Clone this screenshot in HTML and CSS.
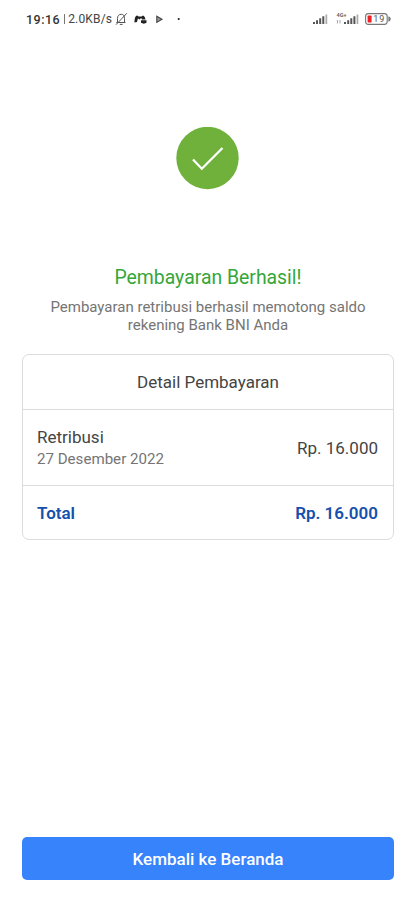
FILE: index.html
```html
<!DOCTYPE html>
<html lang="id">
<head>
<meta charset="utf-8">
<meta name="viewport" content="width=device-width, initial-scale=1">
<title>Pembayaran Berhasil</title>
<link rel="stylesheet" href="styles.css">
</head>
<body>
<div class="screen">
  <header class="status">
    <div class="status-left">
      <span class="time">19:16</span><span class="divider"></span><span class="speed">2.0KB/s</span>
      <svg class="notices" width="68" height="16" viewBox="0 0 68 16" fill="none">
        <path d="M2.3 11.5h9.2M3.5 11.3V7.4C3.5 4.7 5 3.3 7.2 3.3s3.3 1.5 3.3 4v4M5.8 13.4h2.8M2 13.7 12.8 2.3" stroke="#555" stroke-width="1"/>
        <path d="M20.5 11.5c0-4 .8-6.8 2.7-7l1.4.9h3l1.4-.9c1.7.6 2.3 2.5 2.4 4.1h-3.2l-1.2-1.5-1.3 1.5-1.8-1.2-.9 3.7z" fill="#222"/>
        <path d="M27 9.2h5.5v2.6l-2.6 1-2.9-1z" fill="#222"/>
        <path d="M42.8 5.2v6.2l5.2-3.1z" fill="#999" stroke="#444" stroke-width="1.1"/>
        <circle cx="64.7" cy="8" r="1.1" fill="#222"/>
      </svg>
    </div>
    <div class="status-right">
      <svg width="48" height="16" viewBox="0 0 48 16">
        <g fill="#555">
          <path d="M1 11h2v2H1zM4 9.3h2V13H4zM7.2 7.3h2V13h-2zM10.3 5.2h2V13h-2z"/>
          <path d="M13.5 3.5h1.7V13h-1.7z" fill="#aaa"/>
          <path d="M32 11h2v2h-2zM35.2 9.3h2V13h-2zM38.3 7.3h2V13h-2zM41.4 5.2h2V13h-2z"/>
          <path d="M44.6 3.5h1.7V13h-1.7z" fill="#aaa"/>
          <path d="M25.5 12.5V9M28 9v3.5" stroke="#aaa" stroke-width="1"/>
        </g>
        <text x="24.5" y="5.7" class="network">4G+</text>
      </svg>
      <svg class="battery" width="28" height="16" viewBox="0 0 28 16">
        <rect x="1.6" y="2.6" width="21.6" height="10.8" rx="2.8" fill="#fff" stroke="#777" stroke-width="1.1"/>
        <path d="M24.4 5.2q2.4.8 2.4 2.8t-2.4 2.8z" fill="#777"/>
        <rect x="3.6" y="4.5" width="4" height="7" rx=".7" fill="#ed2024"/>
        <text x="9.3" y="11.2" class="charge">19</text>
      </svg>
    </div>
  </header>
  <main class="content">
    <svg class="success" width="63" height="63" viewBox="0 0 63 63">
      <circle cx="31.5" cy="31" r="31.2" fill="#6fb13a"/>
      <path d="M17 32.5l8.8 9.2L46.5 21" fill="none" stroke="#fff" stroke-width="2.3"/>
    </svg>
    <h1 class="title">Pembayaran Berhasil!</h1>
    <p class="message">Pembayaran retribusi berhasil memotong saldo<br>rekening Bank BNI Anda</p>
    <section class="card">
      <h2 class="card-title">Detail Pembayaran</h2>
      <div class="row item">
        <div class="item-info">
          <span class="item-name">Retribusi</span>
          <span class="item-date">27 Desember 2022</span>
        </div>
        <span class="price">Rp. 16.000</span>
      </div>
      <div class="row total">
        <span>Total</span>
        <span>Rp. 16.000</span>
      </div>
    </section>
    <button class="home" type="button">Kembali ke Beranda</button>
  </main>
</div>
</body>
</html>
```
FILE: styles.css
```css
* { box-sizing: border-box; }

body {
  margin: 0;
  background: #fff;
  color: #444;
  font-family: Roboto, "Liberation Sans", sans-serif;
}

.screen {
  display: flex;
  flex-direction: column;
  height: 900px;
}

.status {
  display: flex;
  justify-content: space-between;
  height: 40px;
  padding: 11px 23px 0 26px;
}

.status-left,
.status-right {
  display: flex;
  align-items: center;
  height: 16px;
}

.time {
  color: #333;
  font-size: 12.5px;
  font-weight: 500;
  letter-spacing: .5px;
}

.divider {
  width: 1px;
  height: 10px;
  margin: 0 3px 0 4px;
  background: #777;
}

.speed {
  width: 46px;
  color: #444;
  font-size: 12px;
  letter-spacing: .15px;
  white-space: nowrap;
}

.battery { margin-left: 4px; }

.network {
  fill: #666;
  font-size: 5.5px;
  font-weight: 700;
}

.charge {
  fill: #555;
  font-size: 9px;
  letter-spacing: 1px;
}

.content {
  display: flex;
  flex: 1;
  flex-direction: column;
  padding: 87px 21px 20px 22px;
}

.success {
  flex: none;
  align-self: center;
  margin-right: 1px;
}

.title {
  margin: 76px 0 0;
  color: #35a63a;
  font-size: 19.4px;
  font-weight: 400;
  line-height: 24px;
  text-align: center;
}

.message {
  margin: 8px 0 0;
  color: #757575;
  font-size: 15px;
  line-height: 18px;
  text-align: center;
}

.card {
  height: 186px;
  margin-top: 20px;
  border: 1px solid #dcdcdc;
  border-radius: 7px;
}

.card-title {
  height: 54px;
  margin: 0;
  font-size: 17px;
  font-weight: 400;
  line-height: 55px;
  text-align: center;
}

.row {
  display: flex;
  align-items: center;
  justify-content: space-between;
  padding: 1px 15px 0 14px;
  border-top: 1px solid #dcdcdc;
}

.item { height: 76px; }

.item-info {
  display: flex;
  flex-direction: column;
  gap: 1px;
}

.item-name,
.price {
  font-size: 17px;
  line-height: 21px;
}

.item-date {
  color: #757575;
  font-size: 15.1px;
  line-height: 20px;
}

.total {
  height: 54px;
  color: #1650ad;
  font-size: 17px;
  font-weight: 600;
}

.home {
  height: 43px;
  margin-top: auto;
  border: 0;
  border-radius: 5px;
  background: #3683fc;
  color: #fff;
  font: 500 17px/43px Roboto, "Liberation Sans", sans-serif;
}
```
